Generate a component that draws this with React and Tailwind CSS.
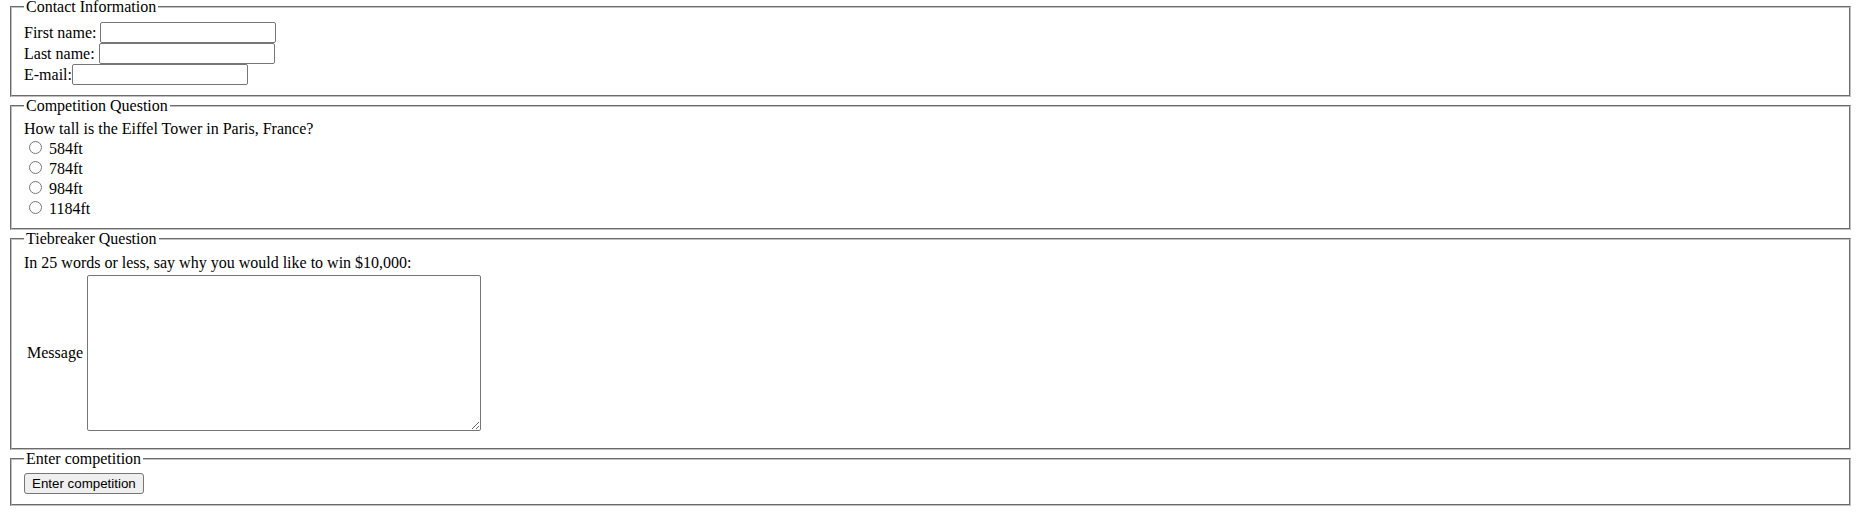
export default function App() {
  const fs =
    "mx-[2px] border-2 [border-style:groove] border-[rgb(192,192,192)] px-[12px] pt-[5.6px] pb-[10px] min-w-min";
  const lg = "px-[2px]";
  const inp =
    "block h-[21px] w-[176px] border border-[#767676] rounded-[2px] bg-white px-[2px] text-[13.333px] [font-family:'Liberation_Sans',Arial,sans-serif]";
  const options = ["584ft", "784ft", "984ft", "1184ft"];
  return (
    <div className="bg-white text-black text-[16px] leading-[normal] [font-family:'Liberation_Serif','Times_New_Roman',serif] px-[8px]">
      <div className="-mt-[2px]">
        <fieldset className={fs}>
          <legend className={lg}>Contact Information</legend>
          <div className="flex h-[21px] items-center gap-[4px] pt-[1px]">
            <span>First name:</span>
            <input type="text" className={inp} />
          </div>
          <div className="flex h-[21px] items-center gap-[4px] pt-[1px]">
            <span>Last name:</span>
            <input type="text" className={inp} />
          </div>
          <div className="flex h-[21px] items-center pt-[1px]">
            <span>E-mail:</span>
            <input type="text" className={inp} />
          </div>
        </fieldset>

        <fieldset className={fs}>
          <legend className={lg}>Competition Question</legend>
          <div>How tall is the Eiffel Tower in Paris, France?</div>
          {options.map((o) => (
            <div key={o}>
              <input
                type="radio"
                name="tower"
                className="mt-[3px] mr-[3px] ml-[5px] h-[13px] w-[13px] align-baseline"
              />{" "}
              {o}
            </div>
          ))}
        </fieldset>

        <fieldset className={fs}>
          <legend className={lg}>Tiebreaker Question</legend>
          <div>In 25 words or less, say why you would like to win $10,000:</div>
          <div className="flex items-center gap-[4px] pt-[3px] pb-[7px] pl-[3px]">
            <span>Message</span>
            <textarea className="block h-[156px] w-[394px] border border-[#767676] rounded-[2px] bg-white p-[2px] text-[13.333px] [font-family:'Liberation_Mono',monospace]" />
          </div>
        </fieldset>

        <fieldset className={fs}>
          <legend className={lg}>Enter competition</legend>
          <button
            type="button"
            className="block h-[21px] border border-[#767676] rounded-[3px] bg-[#efefef] px-[7px] text-[13.333px] leading-[normal] [font-family:'Liberation_Sans',Arial,sans-serif]"
          >
            Enter competition
          </button>
        </fieldset>
      </div>
    </div>
  );
}
